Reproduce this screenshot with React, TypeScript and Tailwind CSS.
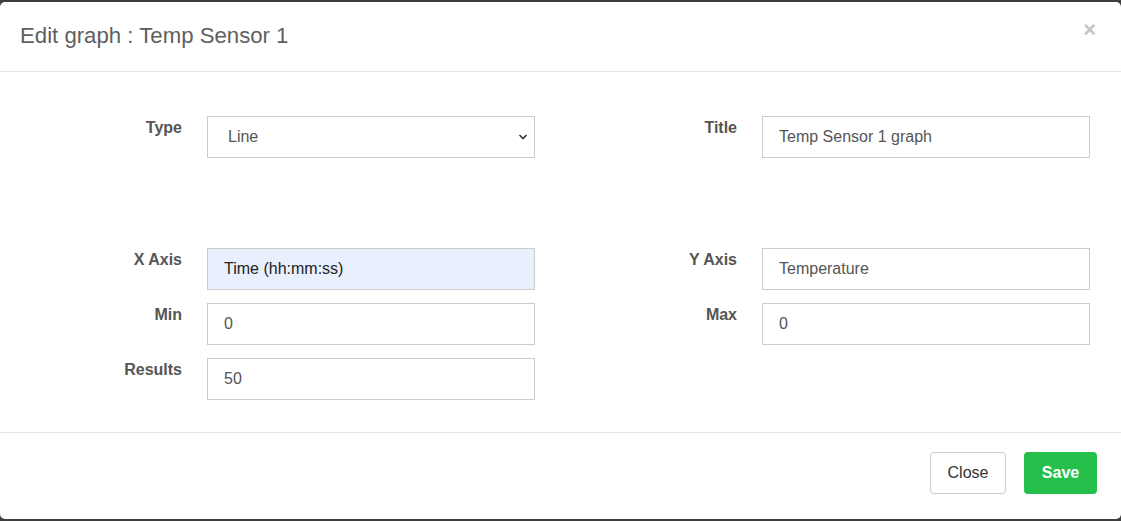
export default function App() {
  const font = { fontFamily: '"Liberation Sans", Arial, sans-serif' };

  const label = "text-right font-bold text-[16px] leading-5 pt-[2px] text-[#555]";
  const box = "h-[42px] w-[328px] border border-[#ccc] px-4 text-[16px] outline-none";
  const input = `${box} bg-white text-[#555]`;

  return (
    <div className="h-[521px] w-[1121px] bg-[#3e3e3e] py-[2px] overflow-hidden" style={font}>
      <div className="flex h-[517px] flex-col rounded-[5px] bg-white">
        {/* header */}
        <div className="flex h-[70px] items-center justify-between border-b border-[#e5e5e5] pl-5 pr-[25px]">
          <h4 className="text-[22.2px] text-[#5f5f5f] mt-[-2px]">Edit graph : Temp Sensor 1</h4>
          <button className="text-[22px] font-bold leading-none text-[#c4c4c4] mt-[-14px]">×</button>
        </div>

        {/* body */}
        <div className="flex-1 px-[25px] pt-[44px]">
          <div className="flex">
            <label className={`${label} w-[157px]`}>Type</label>
            <div className="relative ml-[25px]">
              <select className={`${input} appearance-none pl-5`} defaultValue="Line">
                <option>Line</option>
                <option>Bar</option>
              </select>
              <svg
                className="pointer-events-none absolute right-[7px] top-[17px]"
                width="10"
                height="8"
                viewBox="0 0 10 8"
              >
                <path d="M1.5 2 L5 5.5 L8.5 2" fill="none" stroke="#333" strokeWidth="1.6" />
              </svg>
            </div>
            <label className={`${label} w-[202px]`}>Title</label>
            <input className={`${input} ml-[25px]`} defaultValue="Temp Sensor 1 graph" />
          </div>

          <div className="mt-[90px] flex flex-col gap-[13px]">
            <div className="flex">
              <label className={`${label} w-[157px]`}>X Axis</label>
              <input
                className={`${box} ml-[25px] bg-[#e8f0fe] text-[#222]`}
                defaultValue="Time (hh:mm:ss)"
              />
              <label className={`${label} w-[202px]`}>Y Axis</label>
              <input className={`${input} ml-[25px]`} defaultValue="Temperature" />
            </div>
            <div className="flex">
              <label className={`${label} w-[157px]`}>Min</label>
              <input className={`${input} ml-[25px]`} defaultValue="0" />
              <label className={`${label} w-[202px]`}>Max</label>
              <input className={`${input} ml-[25px]`} defaultValue="0" />
            </div>
            <div className="flex">
              <label className={`${label} w-[157px]`}>Results</label>
              <input className={`${input} ml-[25px]`} defaultValue="50" />
            </div>
          </div>
        </div>

        {/* footer */}
        <div className="flex h-[87px] items-start justify-end gap-[18px] border-t border-[#e5e5e5] pr-6 pt-[19px]">
          <button className="h-[42px] w-[76px] rounded border border-[#ccc] bg-white text-[16px] text-[#333]">
            Close
          </button>
          <button className="h-[42px] w-[73px] rounded bg-[#25bf4c] text-[16px] font-bold text-white">
            Save
          </button>
        </div>
      </div>
    </div>
  );
}
